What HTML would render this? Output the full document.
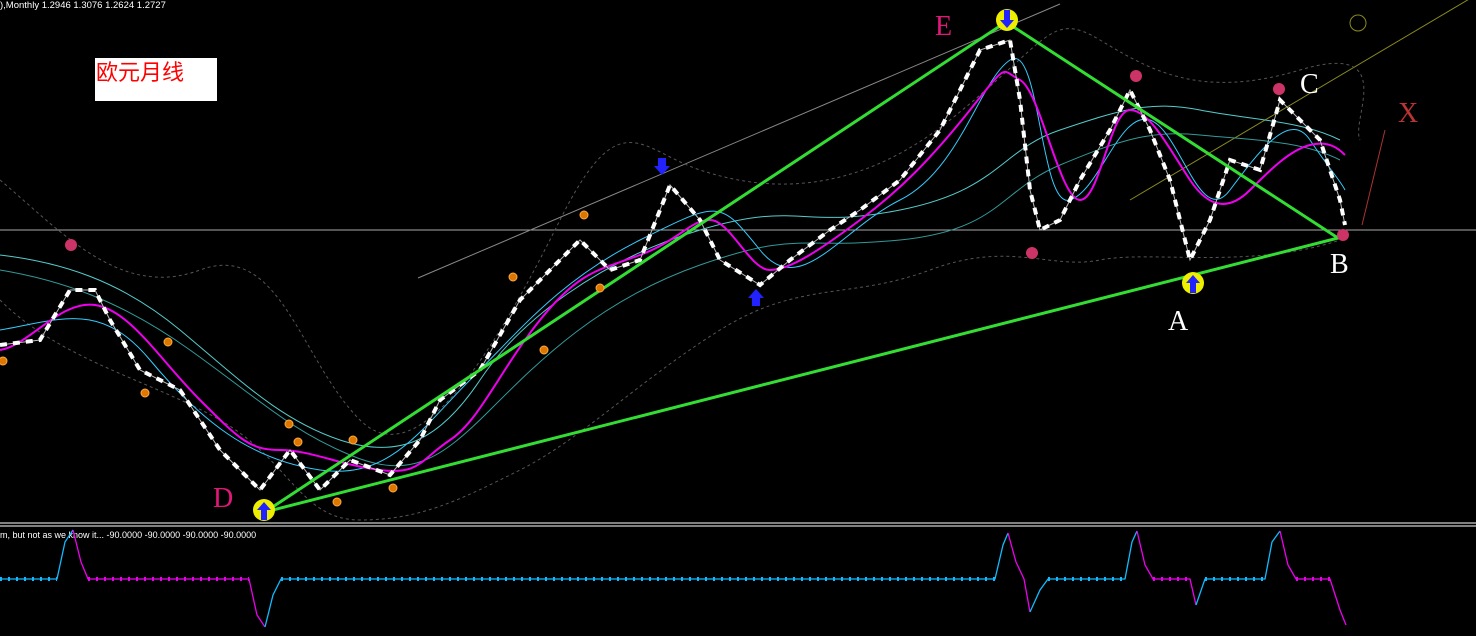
<!DOCTYPE html>
<html><head><meta charset="utf-8"><style>
html,body{margin:0;padding:0;background:#000;width:1476px;height:636px;overflow:hidden}
svg{display:block}
</style></head><body>
<svg width="1476" height="636" viewBox="0 0 1476 636" font-family="Liberation Sans,sans-serif">
<rect width="1476" height="636" fill="#000"/>
<text x="0" y="8" fill="#fff" font-size="9.5">),Monthly  1.2946 1.3076 1.2624 1.2727</text>
<rect x="95" y="58" width="122" height="43" fill="#fff"/>
<text x="96" y="80" fill="#f00" font-size="22" font-family="Noto Sans CJK SC,sans-serif">欧元月线</text>
<line x1="0" y1="230" x2="1476" y2="230" stroke="#aaa" stroke-width="1"/>
<line x1="418" y1="278" x2="1060" y2="4" stroke="#888" stroke-width="1"/>
<line x1="1130" y1="200" x2="1476" y2="-5" stroke="#8a8a20" stroke-width="1"/>
<ellipse cx="1358" cy="23" rx="8" ry="8" fill="none" stroke="#8a8a20"/>
<line x1="1362" y1="225" x2="1385" y2="130" stroke="#a33" stroke-width="1"/>
<path d="M0,180 C60,230 120,300 200,270 S300,360 360,420 S500,340 560,220 S640,150 700,170 S850,200 950,120 S1050,10 1100,40 S1200,100 1300,70 S1350,120 1360,140" fill="none" stroke="#555" stroke-dasharray="3 3"/>
<path d="M0,300 C60,360 150,380 220,420 S300,520 360,520 S460,500 520,470 S640,380 720,330 S850,300 930,270 S1050,270 1100,260 S1250,270 1340,240" fill="none" stroke="#555" stroke-dasharray="3 3"/>
<path d="M0,255 C60,262 120,280 180,330 S280,420 340,440 S440,440 480,380 S600,260 700,230 S800,230 900,210 S1000,150 1060,130 S1150,100 1200,110 S1300,120 1340,140" fill="none" stroke="#5cc" stroke-width="1"/>
<path d="M0,270 C60,280 120,300 190,350 S290,430 350,455 S440,460 490,410 S600,300 700,265 S800,250 900,240 S1000,190 1060,165 S1150,130 1200,135 S1300,140 1340,160" fill="none" stroke="#399" stroke-width="1"/>
<path d="M0,330 C60,320 100,300 150,360 S250,460 320,470 S420,430 470,380 S560,280 640,240 S720,200 760,250 S840,230 900,200 S980,80 1010,60 S1040,210 1070,200 S1120,110 1150,120 S1200,230 1230,190 S1290,110 1310,140 S1340,180 1345,190" fill="none" stroke="#3cf" stroke-width="1"/>
<path d="M0,350 C30,345 60,300 95,305 S160,360 200,400 S250,450 280,450 S340,465 380,470 S420,460 450,440 S500,370 540,320 S600,270 640,255 S690,220 710,220 S750,270 770,270 S820,250 860,220 S930,160 970,110 S1000,70 1020,80 S1060,200 1080,200 S1110,110 1130,110 S1170,150 1190,180 S1230,210 1250,190 S1290,150 1310,145 S1340,150 1345,155" fill="none" stroke="#e0e" stroke-width="2"/>
<path d="M0,345 L40,340 L70,290 L95,290 L110,320 L140,370 L180,390 L220,450 L260,490 L290,450 L320,490 L350,460 L390,475 L420,440 L440,400 L480,370 L520,300 L560,260 L580,240 L610,270 L640,260 L670,185 L700,220 L720,260 L760,285 L790,260 L830,230 L860,210 L900,180 L940,130 L980,50 L1010,40 L1020,100 L1030,190 L1040,230 L1060,220 L1080,180 L1110,130 L1130,90 L1150,130 L1170,180 L1190,260 L1210,220 L1230,160 L1260,170 L1280,100 L1300,120 L1320,140 L1340,200 L1345,225" fill="none" stroke="#bbb" stroke-width="1"/>
<path d="M0,345 L40,340 L70,290 L95,290 L110,320 L140,370 L180,390 L220,450 L260,490 L290,450 L320,490 L350,460 L390,475 L420,440 L440,400 L480,370 L520,300 L560,260 L580,240 L610,270 L640,260 L670,185 L700,220 L720,260 L760,285 L790,260 L830,230 L860,210 L900,180 L940,130 L980,50 L1010,40 L1020,100 L1030,190 L1040,230 L1060,220 L1080,180 L1110,130 L1130,90 L1150,130 L1170,180 L1190,260 L1210,220 L1230,160 L1260,170 L1280,100 L1300,120 L1320,140 L1340,200 L1345,225" fill="none" stroke="#fff" stroke-width="4" stroke-dasharray="7 6"/>
<polyline points="265,512 1006,22 1338,238 265,512" fill="none" stroke="#3d3" stroke-width="3"/>
<g fill="#d70" stroke="#fa4" stroke-width="1">
<circle cx="3" cy="361" r="4"/><circle cx="145" cy="393" r="4"/><circle cx="168" cy="342" r="4"/><circle cx="289" cy="424" r="4"/><circle cx="298" cy="442" r="4"/><circle cx="353" cy="440" r="4"/><circle cx="337" cy="502" r="4"/><circle cx="393" cy="488" r="4"/><circle cx="513" cy="277" r="4"/><circle cx="544" cy="350" r="4"/><circle cx="584" cy="215" r="4"/><circle cx="600" cy="288" r="4"/>
</g>
<g fill="#c36"><circle cx="71" cy="245" r="6"/><circle cx="1136" cy="76" r="6"/><circle cx="1279" cy="89" r="6"/><circle cx="1032" cy="253" r="6"/><circle cx="1343" cy="235" r="6"/></g>
<g fill="#22f"><path d="M658,158 h8 v8 h4 l-8,9 l-8,-9 h4z"/><path d="M752,306 h8 v-8 h4 l-8,-9 l-8,9 h4z"/></g>
<g><circle cx="1007" cy="20" r="11" fill="#ee0"/><path d="M1004,10 h6 v10 h4 l-7,8 l-7,-8 h4z" fill="#22f"/>
<circle cx="1193" cy="283" r="11" fill="#ee0"/><path d="M1190,293 h6 v-10 h4 l-7,-8 l-7,8 h4z" fill="#22f"/>
<circle cx="264" cy="510" r="11" fill="#ee0"/><path d="M261,520 h6 v-10 h4 l-7,-8 l-7,8 h4z" fill="#22f"/></g>
<g font-family="Liberation Serif,serif" font-size="28">
<text x="935" y="35" fill="#e2177a">E</text>
<text x="213" y="507" fill="#e2177a">D</text>
<text x="1168" y="330" fill="#fff">A</text>
<text x="1330" y="273" fill="#fff">B</text>
<text x="1300" y="93" fill="#fff">C</text>
<text x="1398" y="122" fill="#b33">X</text>
</g>
<line x1="0" y1="523" x2="1476" y2="523" stroke="#fff"/>
<line x1="0" y1="526" x2="1476" y2="526" stroke="#fff"/>
<text x="0" y="538" fill="#fff" font-size="9">m, but not as we know it...  -90.0000 -90.0000 -90.0000 -90.0000</text>
<g fill="none" stroke-width="1.3">
<polyline stroke="#1bf" points="0,579 57,579 65,542 73,530"/>
<polyline stroke="#e0e" points="73,530 81,562 88,579 249,579 257,615 265,627"/>
<polyline stroke="#1bf" points="265,627 273,595 281,579 995,579 1003,545 1008,533"/>
<polyline stroke="#e0e" points="1008,533 1016,562 1024,579 1030,612"/>
<polyline stroke="#1bf" points="1030,612 1040,590 1048,579 1125,579 1132,542 1137,531"/>
<polyline stroke="#e0e" points="1137,531 1145,565 1153,579 1190,579 1196,605"/>
<polyline stroke="#1bf" points="1196,605 1205,579 1265,579 1272,542 1280,531"/>
<polyline stroke="#e0e" points="1280,531 1288,565 1296,579 1330,579 1340,610 1346,625"/>
</g>
<line x1="0" y1="579" x2="57" y2="579" stroke="#1bf" stroke-width="4" stroke-dasharray="2 6"/>
<line x1="88" y1="579" x2="249" y2="579" stroke="#e0e" stroke-width="4" stroke-dasharray="2 6"/>
<line x1="281" y1="579" x2="995" y2="579" stroke="#1bf" stroke-width="4" stroke-dasharray="2 6"/>
<line x1="1048" y1="579" x2="1125" y2="579" stroke="#1bf" stroke-width="4" stroke-dasharray="2 6"/>
<line x1="1153" y1="579" x2="1190" y2="579" stroke="#e0e" stroke-width="4" stroke-dasharray="2 6"/>
<line x1="1205" y1="579" x2="1265" y2="579" stroke="#1bf" stroke-width="4" stroke-dasharray="2 6"/>
<line x1="1296" y1="579" x2="1330" y2="579" stroke="#e0e" stroke-width="4" stroke-dasharray="2 6"/>
</svg>
</body></html>
